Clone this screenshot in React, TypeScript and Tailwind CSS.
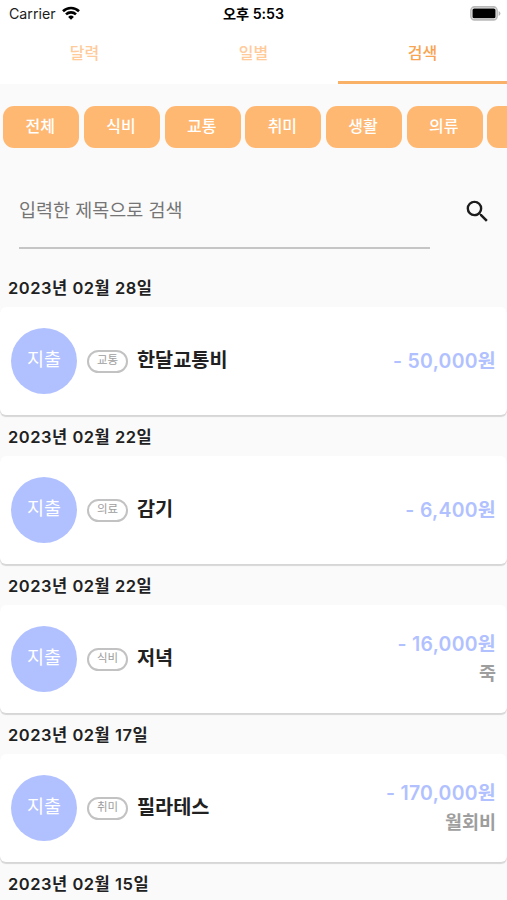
import { MdSearch } from "react-icons/md";

const tabs = [
  { label: "달력", active: false },
  { label: "일별", active: false },
  { label: "검색", active: true },
];

const categories = ["전체", "식비", "교통", "취미", "생활", "의류"];

type Entry = {
  date: string;
  category: string;
  title: string;
  amount: string;
  memo?: string;
};

const entries: Entry[] = [
  { date: "2023년 02월 28일", category: "교통", title: "한달교통비", amount: "50,000원" },
  { date: "2023년 02월 22일", category: "의료", title: "감기", amount: "6,400원" },
  { date: "2023년 02월 22일", category: "식비", title: "저녁", amount: "16,000원", memo: "죽" },
  { date: "2023년 02월 17일", category: "취미", title: "필라테스", amount: "170,000원", memo: "월회비" },
];

export default function App() {
  return (
    <div className="flex h-[900px] w-[507px] flex-col overflow-hidden bg-[#fafafa] font-['Inter','Noto_Sans_CJK_KR',sans-serif] text-[#212121]">
      <header className="h-[84px] shrink-0 bg-white">
        <StatusBar />
        <nav className="grid h-[57px] grid-cols-3">
          {tabs.map((tab) => (
            <button
              key={tab.label}
              className={
                tab.active
                  ? "border-b-[3px] border-[#f9b067] pb-[3px] text-base font-medium text-[#f9a451]"
                  : "border-b-[3px] border-transparent pb-[3px] text-base font-medium text-[#ffcb9a]"
              }
            >
              {tab.label}
            </button>
          ))}
        </nav>
      </header>

      <div className="flex shrink-0 gap-[4.7px] overflow-hidden pt-[22px] pl-[3.3px]">
        {categories.map((name) => (
          <button key={name} className="h-[42px] w-[76px] shrink-0 rounded-[11px] bg-[#ffb872] pr-[2px] pb-[2px] text-base font-medium text-white">
            {name}
          </button>
        ))}
        <div className="h-[42px] w-[76px] shrink-0 rounded-[11px] bg-[#ffb872]" />
      </div>

      <div className="flex h-[118px] shrink-0 pt-[37px] pl-[19px]">
        <div className="h-[64px] w-[411px] border-b-[2px] border-[#c5c5c5] pt-[11px] text-[18.5px] leading-[28px] text-[#757575]">
          입력한 제목으로 검색
        </div>
        <MdSearch className="mt-[12px] ml-[33px] size-[29px] text-[#1c1c1c]" />
      </div>

      <main>
        {entries.map((entry, i) => (
          <section key={i}>
            <DateLabel date={entry.date} />
            <EntryCard entry={entry} />
          </section>
        ))}
        <DateLabel date="2023년 02월 15일" />
      </main>
    </div>
  );
}

function StatusBar() {
  return (
    <div className="grid h-[27px] grid-cols-3 items-center pr-[6px] pl-[9px] text-black">
      <div className="flex items-center gap-[6px] text-[14.2px] text-[#1c1c1c]">
        Carrier
        <svg viewBox="0 0 18 14" className="h-[14px] w-[18px]" fill="none" stroke="#000" strokeWidth="2.6">
          <path d="M1 5.2a11.5 11.5 0 0 1 16 0" />
          <path d="M4 8.4a7.2 7.2 0 0 1 10 0" />
          <path d="M9 13.8 6.1 10.9a4.1 4.1 0 0 1 5.8 0Z" fill="#000" stroke="none" />
        </svg>
      </div>
      <div className="pr-[3px] text-center text-[14.2px] font-semibold">오후 5:53</div>
      <svg viewBox="0 0 31 15" className="h-[15px] w-[31px] justify-self-end">
        <rect x="0.9" y="0.9" width="26.2" height="13" rx="3.6" fill="#fff" stroke="#b9b9b9" strokeWidth="1.6" />
        <rect x="2.5" y="2.5" width="23" height="9.8" rx="1.6" fill="#000" />
        <path d="M28.6 5v5q1.8-.7 1.8-2.5T28.6 5Z" fill="#b5b5b5" />
      </svg>
    </div>
  );
}

function DateLabel({ date }: { date: string }) {
  return (
    <h2 className="h-[41px] pt-[11px] pl-[8px] text-[16.5px] leading-[22px] font-semibold tracking-[0.52px]">{date}</h2>
  );
}

function EntryCard({ entry }: { entry: Entry }) {
  return (
    <div className="flex h-[108px] items-center rounded-[6px] bg-white px-[11px] shadow-[0_1.5px_1px_rgba(0,0,0,0.14)]">
      <div className="flex size-[66px] items-center justify-center rounded-full bg-[#b1c1ff] pb-[3px] text-[18.5px] text-white">
        지출
      </div>
      <div className="ml-[10px] flex h-[23px] w-[41px] items-center justify-center rounded-full border-2 border-[#c2c2c2] text-[11.5px] text-[#9e9e9e]">
        {entry.category}
      </div>
      <div className="ml-[9px] text-[19.7px] font-bold">{entry.title}</div>
      <div className="ml-auto text-right text-[18.5px] leading-[29px] font-semibold">
        <div className="text-[19.4px] tracking-[0.3px] text-[#b1c1ff]">- {entry.amount}</div>
        {entry.memo && <div className="text-[#9e9e9e]">{entry.memo}</div>}
      </div>
    </div>
  );
}
